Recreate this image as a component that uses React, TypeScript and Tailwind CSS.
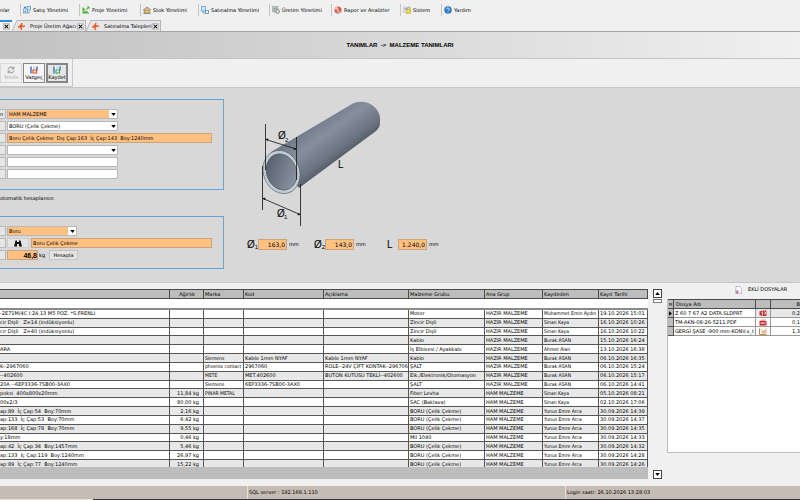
import type { ReactNode } from 'react';
import clsx from 'clsx';

const menu = [
  { label: 'Satış Yönetimi', icon: 'sales', width: 'w-[59px]' },
  { label: 'Proje Yönetimi', icon: 'project', width: 'w-[61px]' },
  { label: 'Stok Yönetimi', icon: 'stock', width: 'w-[58px]' },
  { label: 'Satınalma Yönetimi', icon: 'purchase', width: 'w-[71px]' },
  { label: 'Üretim Yönetimi', icon: 'production', width: 'w-[62px]' },
  { label: 'Rapor ve Analizler', icon: 'report', width: 'w-[69px]' },
  { label: 'Sistem', icon: 'system', width: 'w-[41px]' },
  { label: 'Yardım', icon: 'help', width: 'w-[60px]' },
];

// name, weight, brand, code, description, material group, main group, saved by, date
const rows = [
  ['-2E71M/4C I:24,13 M5 POZ. *S.FRENLI', '', '', '', '', 'Motor', 'HAZIR MALZEME', 'Muhammet Emin Aydın', '19.10.2026 15:01'],
  ['cir Dişli   Z=14 (indüksiyonlu)', '', '', '', '', 'Zincir Dişli', 'HAZIR MALZEME', 'Sinan Kaya', '16.10.2026 10:26'],
  ['cir Dişli   Z=40 (indüksiyonlu)', '', '', '', '', 'Zincir Dişli', 'HAZIR MALZEME', 'Sinan Kaya', '16.10.2026 10:22'],
  ['', '', '', '', '', 'Kablo', 'HAZIR MALZEME', 'Burak ASAN', '15.10.2026 16:24'],
  ['ARA', '', '', '', '', 'İş Elbisesi / Ayakkabı', 'HAZIR MALZEME', 'Ahmet Alan', '13.10.2026 16:38'],
  ['', '', 'Siemens', 'Kablo 1mm NYAF', 'Kablo 1mm NYAF', 'Kablo', 'HAZIR MALZEME', 'Burak ASAN', '06.10.2026 16:35'],
  ['K--2967060', '', 'phoenix contact', '2967060', 'ROLE--24V ÇİFT KONTAK--296706', 'ŞALT', 'HAZIR MALZEME', 'Burak ASAN', '06.10.2026 15:24'],
  ['--402600', '', 'METE', 'MET.402600', 'BUTON KUTUSU TEKLİ--402600', 'Elk./Elektronik/Otomasyon', 'HAZIR MALZEME', 'Burak ASAN', '06.10.2026 15:17'],
  ['20A --6EP3336-7SB00-3AX0', '', 'Siemens', '6EP3336-7SB00-3AX0', '', 'ŞALT', 'HAZIR MALZEME', 'Burak ASAN', '06.10.2026 14:41'],
  ['poksi  400x800x20mm', '11,84 kg', 'PINAR METAL', '', '', 'Fiber Levha', 'HAM MALZEME', 'Sinan Kaya', '05.10.2026 08:21'],
  ['00x2/3', '80,00 kg', '', '', '', 'SAC (Baklava)', 'HAM MALZEME', 'Sinan Kaya', '02.10.2026 17:06'],
  ['ap:89  İç Çap:54  Boy:70mm', '2,16 kg', '', '', '', 'BORU (Çelik Çekme)', 'HAM MALZEME', 'Yunus Emre Arca', '30.09.2026 14:39'],
  ['ap:133  İç Çap:53  Boy:70mm', '6,42 kg', '', '', '', 'BORU (Çelik Çekme)', 'HAM MALZEME', 'Yunus Emre Arca', '30.09.2026 14:37'],
  ['ap:168  İç Çap:78  Boy:70mm', '9,55 kg', '', '', '', 'BORU (Çelik Çekme)', 'HAM MALZEME', 'Yunus Emre Arca', '30.09.2026 14:35'],
  ['y:18mm', '0,46 kg', '', '', '', 'Mil 1040', 'HAM MALZEME', 'Yunus Emre Arca', '30.09.2026 14:33'],
  ['ap:42  İç Çap:34  Boy:1457mm', '5,46 kg', '', '', '', 'BORU (Çelik Çekme)', 'HAM MALZEME', 'Yunus Emre Arca', '30.09.2026 14:32'],
  ['ap:133  İç Çap:119  Boy:1240mm', '26,97 kg', '', '', '', 'BORU (Çelik Çekme)', 'HAM MALZEME', 'Yunus Emre Arca', '30.09.2026 14:28'],
  ['ap:89  İç Çap:77  Boy:1240mm', '15,22 kg', '', '', '', 'BORU (Çelik Çekme)', 'HAM MALZEME', 'Yunus Emre Arca', '30.09.2026 14:26'],
];

const headers = ['', 'Ağırlık', 'Marka', 'Kod', 'Açıklama', 'Malzeme Grubu', 'Ana Grup', 'Kaydeden', 'Kayıt Tarihi'];

const files = [
  { name: 'Z 60 7 67 A2 DATA.SLDPRT', icon: 'part', size: '0,2' },
  { name: 'TM-AKN-08-26-5211.PDF', icon: 'pdf', size: '0,1' },
  { name: 'GERGİ ŞASE -900 mm-KONV.x_t', icon: 'xt', size: '1,3' },
];

const MenuIcon = ({ name }: { name: string }) => (
  <svg viewBox="0 0 16 16" className="size-2 shrink-0" aria-hidden="true">
    {name === 'sales' && (
      <>
        <rect x="1" y="6" width="8" height="8" fill="#dcecf8" stroke="#4c8fc4" strokeWidth="1.4" />
        <rect x="8" y="1" width="7" height="7" fill="#cfe4f5" stroke="#4c8fc4" strokeWidth="1.4" />
        <path d="M2 3h4M4 1v4M12 11v4" stroke="#2f79b8" strokeWidth="1.6" />
        <path d="M3 11h3" stroke="#2f79b8" strokeWidth="2" />
      </>
    )}
    {name === 'project' && (
      <>
        <path d="M1 2l5 4-1 3 6 2 4 4H1z" fill="#49b53b" />
        <path d="M8 8l6-6M10 2h4v4" fill="none" stroke="#3fa535" strokeWidth="2" />
        <path d="M3 12l4-4" stroke="#fff" strokeWidth="1.4" />
      </>
    )}
    {name === 'stock' && (
      <>
        <path d="M1 8l7-6 7 6v6H1z" fill="#d8b78a" />
        <path d="M0 8l8-6 8 6" fill="none" stroke="#8b7a70" strokeWidth="1.6" />
        <rect x="3" y="9" width="10" height="4" fill="#f2cf7e" stroke="#a5762f" />
        <path d="M1 15h14" stroke="#7d93ac" strokeWidth="2" />
      </>
    )}
    {name === 'purchase' && (
      <>
        <rect x="1" y="1" width="8" height="9" fill="#cfe4f5" stroke="#5c9bcd" strokeWidth="1.4" />
        <rect x="9" y="9" width="6" height="6" fill="#e8f3fb" stroke="#4c8fc4" strokeWidth="1.6" />
        <path d="M4 10v4h4" fill="none" stroke="#3f85bd" strokeWidth="1.4" />
      </>
    )}
    {name === 'production' && (
      <>
        <rect x="1" y="1" width="11" height="11" fill="#c9ced2" stroke="#8e979d" />
        <path d="M1 5h11M1 8h11M5 1v11M9 1v11" stroke="#8e979d" />
        <circle cx="11" cy="11" r="4" fill="#b9c8b8" stroke="#7d887c" strokeWidth="1.4" />
        <circle cx="11" cy="11" r="1.4" fill="#fff" />
      </>
    )}
    {name === 'report' && (
      <>
        <circle cx="8" cy="8" r="7" fill="#d9574b" />
        <path d="M8 8V1a7 7 0 0 0-7 6z" fill="#f3b2a8" />
        <path d="M8 8l6 4a7 7 0 0 1-7 3z" fill="#b9b3b3" />
        <path d="M6 5l3 3-3 3" fill="none" stroke="#fff" strokeWidth="1.2" />
      </>
    )}
    {name === 'system' && (
      <>
        <rect x="1" y="2" width="13" height="11" fill="#dfe6ee" stroke="#aab6c6" />
        <path d="M3 5h6M3 8h4" stroke="#7c9cc9" strokeWidth="1.4" />
        <path d="M8 7V5a3 3 0 0 1 6 0v2" fill="none" stroke="#b59b2c" strokeWidth="1.4" />
        <rect x="7" y="7" width="8" height="8" fill="#f3d640" stroke="#b59b2c" />
      </>
    )}
    {name === 'help' && (
      <>
        <circle cx="8" cy="8" r="7.5" fill="#2e78c2" />
        <path d="M5.5 6.2a2.5 2.5 0 1 1 3.7 2.2C8.3 8.9 8 9.2 8 10" fill="none" stroke="#fff" strokeWidth="1.6" />
        <circle cx="8" cy="12.2" r="1" fill="#fff" />
      </>
    )}
  </svg>
);

const TabMark = () => (
  <svg viewBox="0 0 12 12" className="size-[7px] shrink-0" aria-hidden="true">
    <path d="M6.5 0L5.5 12M0 7l12-2M3 3l3 3" stroke="#ea5b2b" strokeWidth="2.4" />
  </svg>
);

const CloseButton = ({ label }: { label: string }) => (
  <button aria-label={label} className="flex size-[7px] shrink-0 items-center justify-center border border-[#c4c4c4] bg-white">
    <svg viewBox="0 0 8 8" className="size-[5px] shrink-0">
      <path d="M1 1l6 6M7 1L1 7" stroke="#111" strokeWidth="1.8" />
    </svg>
  </button>
);

const Tab = ({ label }: { label: string }) => (
  <div className="flex w-[74px] items-stretch">
    <svg viewBox="0 0 6 11" className="h-[11px] w-1.5 shrink-0" aria-hidden="true">
      <path d="M0 11L5 1H6V11Z" fill="#e6e6e6" />
      <path d="M0 11L5 .5H6" fill="none" stroke="#b5b5b5" />
    </svg>
    <div className="flex h-[11px] flex-1 items-center border-t border-r border-[#b5b5b5] bg-[#e6e6e6] pr-px">
      <TabMark />
      <button className="flex-1 pl-[5px] text-left whitespace-nowrap">{label}</button>
      <CloseButton label={`${label} kapat`} />
    </div>
  </div>
);

const DiskIcon = ({ mark }: { mark: string }) => (
  <svg viewBox="0 0 16 16" className="size-2 shrink-0" aria-hidden="true">
    <path d="M1 1h14v14H1z" fill="#fff" />
    <path d="M6 1h5v5H6z" fill="#cfd8e6" />
    <path d="M2 1v14M14 1v8" stroke="#2f5fb3" strokeWidth="2.6" />
    <path d="M6 14V8h7v6z" fill="none" stroke={mark} strokeWidth="2.4" />
  </svg>
);

const ToolButton = ({ label, children, disabled, active }: { label: string; children: ReactNode; disabled?: boolean; active?: boolean }) => (
  <button
    disabled={disabled}
    className={clsx(
      'flex h-5 w-[22px] flex-col items-center border pt-0.5 leading-[7px]',
      disabled && 'border-[#d8d8d8] text-[#a9a9a9]',
      active && 'border-2 border-[#858585] bg-[#e4e4e4] pt-px',
      !disabled && !active && 'border-[#858585] bg-[#f6f6f6]',
    )}
  >
    {children}
    {label}
  </button>
);

const Stub = ({ children }: { children?: ReactNode }) => (
  <span className="h-[10px] w-1.5 shrink-0 overflow-hidden border-y border-r border-[#b9b9b9] bg-[#e6e6e6] leading-[8px]">{children}</span>
);

const Dropdown = ({ label, value, className }: { label: string; value: string; className: string }) => (
  <div className="relative flex">
    <select aria-label={label} className={clsx('h-[10px] appearance-none border border-[#b9b9b9] pl-px leading-[8px]', className)}>
      <option>{value}</option>
    </select>
    <span className="pointer-events-none absolute top-px right-px flex size-2 items-center justify-center bg-white">
      <svg viewBox="0 0 6 4" className="h-[3px] w-[5px]">
        <path d="M0 0h6L3 4z" fill="#000" />
      </svg>
    </span>
  </div>
);

const Measure = ({ sign, sub, value }: { sign: string; sub?: string; value: string }) => (
  <label className="flex w-[50px] items-center">
    <span className="w-[11px] shrink-0 font-['Liberation_Sans',sans-serif] text-[10px] leading-[10px]">
      {sign}
      {sub && <sub className="text-[6px]">{sub}</sub>}
    </span>
    <input defaultValue={value} className="h-[11px] w-[29px] shrink-0 border border-[#c9a37c] bg-[#ffc080] pr-px text-right text-[6px]" />
    <span className="pl-0.5">mm</span>
  </label>
);

const Pipe = () => (
  <svg viewBox="255 95 135 140" className="h-[140px] w-[135px]" role="img" aria-label="Boru ölçüleri">
    <defs>
      <linearGradient id="body" gradientUnits="userSpaceOnUse" x1="312" y1="124" x2="340" y2="162">
        <stop offset="0" stopColor="#707a88" />
        <stop offset="0.35" stopColor="#858f9e" />
        <stop offset="0.75" stopColor="#6c7582" />
        <stop offset="1" stopColor="#4f5661" />
      </linearGradient>
      <linearGradient id="bore" x1="0" y1="0" x2="1" y2="1">
        <stop offset="0" stopColor="#4f5864" />
        <stop offset="1" stopColor="#939dab" />
      </linearGradient>
    </defs>
    <path d="M271 152L352 104C358 101 366 101 372 105C378 109 381 116 380 122C380 126 379 128 376 131L299 188Z" fill="url(#body)" />
    <ellipse cx="281.5" cy="172" rx="18" ry="22" transform="rotate(-20 281.5 172)" fill="#ced7df" stroke="#4b535e" strokeWidth="0.6" />
    <ellipse cx="281.5" cy="172" rx="16.6" ry="20.5" transform="rotate(-20 281.5 172)" fill="none" stroke="#a3aeba" strokeWidth="1.8" strokeDasharray="0.6 1.4" />
    <ellipse cx="281.5" cy="172" rx="15" ry="18.5" transform="rotate(-20 281.5 172)" fill="url(#bore)" stroke="#4b535e" strokeWidth="0.6" />
    <g stroke="#111" strokeWidth="0.8">
      <path d="M265.5 124V170M296.5 137V180M262.5 166V210M300.5 184V226" />
      <path d="M266 139.5L296 149M263 198.5L300 214.5" />
    </g>
    <path d="M265.5 139l3-.5-1 2.5zM296.5 149.5l-3 .5 1-2.5zM262.5 198l3.2-.2-1.3 2.5zM300.5 215l-3.2.2 1.3-2.5z" fill="#111" />
    <g className="fill-black font-['Liberation_Sans',sans-serif] text-[10px]">
      <text x="278" y="139">Ø</text>
      <text x="277" y="217">Ø</text>
      <text x="338" y="168">L</text>
    </g>
    <g className="fill-black font-['Liberation_Sans',sans-serif] text-[6px]">
      <text x="285" y="142">2</text>
      <text x="284" y="219">1</text>
    </g>
  </svg>
);

const FileIcon = ({ name }: { name: string }) => (
  <svg viewBox="0 0 16 14" className="mx-auto h-[7px] w-2" aria-hidden="true">
    {name === 'part' && (
      <>
        <path d="M1 3l6-2v11L1 10zM8 1h7v11H8z" fill="#c9262b" />
        <path d="M4 5l3 1v3M10 4h3v4h-3" fill="none" stroke="#fff" strokeWidth="1.4" />
      </>
    )}
    {name === 'pdf' && (
      <>
        <path d="M3 1h10v4H3z" fill="#e9a6a6" />
        <rect x="1" y="4" width="14" height="9" rx="1" fill="#c9262b" />
        <path d="M3 8h10" stroke="#fff" strokeWidth="2" />
      </>
    )}
    {name === 'xt' && (
      <>
        <path d="M1 1v12h14" fill="none" stroke="#c48a4a" strokeWidth="2" />
        <path d="M4 10l4-3 2 2 5-7v9H4z" fill="#e6b98a" />
        <path d="M4 3l4 5M8 8l7-6" stroke="#b86a2c" strokeWidth="1.4" />
      </>
    )}
  </svg>
);

const ScrollArrow = ({ up }: { up?: boolean }) => (
  <button aria-label={up ? 'Yukarı' : 'Aşağı'} className="flex size-[9px] items-center justify-center border border-[#444] bg-white">
    <svg viewBox="0 0 6 4" className="h-[3px] w-[5px]">
      <path d={up ? 'M0 4h6L3 0z' : 'M0 0h6L3 4z'} fill="#000" />
    </svg>
  </button>
);

const Columns = () => (
  <colgroup>
    <col />
    <col className="w-[34px]" />
    <col className="w-10" />
    <col className="w-20" />
    <col className="w-[85px]" />
    <col className="w-[76px]" />
    <col className="w-[58px]" />
    <col className="w-14" />
    <col className="w-[49px]" />
  </colgroup>
);

const MaterialTable = () => (
  <div className="h-[190px] overflow-hidden bg-[#bdbdbd]">
    <div className="h-[178px] overflow-hidden">
      <table className="w-full table-fixed border-separate border-spacing-0 bg-white leading-[7px] whitespace-pre">
        <Columns />
        <thead>
          <tr className="h-[10px]">
            {headers.map((header, i) => (
              <th
                key={i}
                className={clsx(
                  'border-y border-r border-[#4a4a4a] bg-[#bdbdbd] p-0 pl-px font-normal',
                  header === 'Ağırlık' ? 'text-center' : 'text-left',
                )}
              >
                {header}
              </th>
            ))}
          </tr>
          <tr className="h-[11px]">
            <td colSpan={9} className="border-b-2 border-[#8a8a8a] p-0" />
          </tr>
        </thead>
      </table>
      <table className="h-[159px] w-full table-fixed border-separate border-spacing-0 bg-white leading-[7px] whitespace-pre">
        <Columns />
        <tbody>
          {rows.map((row, r) => (
            <tr key={r} className="even:bg-[#e8e8e8]">
              {row.map((cell, c) => (
                <td
                  key={c}
                  className={clsx(
                    'overflow-hidden border-r border-b border-[#555] p-0',
                    c === 1 && 'pr-1 text-right',
                    c > 1 && 'pl-px',
                    // long names in narrow columns
                    (c === 2 || c === 7) && "font-['DejaVu_Sans_Condensed',sans-serif]",
                  )}
                >
                  {cell}
                </td>
              ))}
            </tr>
          ))}
        </tbody>
      </table>
    </div>
  </div>
);

const Attachments = () => (
  <aside className="w-[133px] shrink-0 overflow-hidden">
    <h2 className="mb-[3px] flex h-[13px] items-center gap-1.5 pl-[68px] whitespace-nowrap">
      <svg viewBox="0 0 14 16" className="h-2 w-[7px] shrink-0" aria-hidden="true">
        <path d="M2 1h7l4 4v10H2z" fill="#fff" stroke="#8a7aa8" />
        <path d="M1 8l5 5M6 8v5H1" fill="none" stroke="#b1508c" strokeWidth="1.6" />
      </svg>
      EKLİ DOSYALAR
    </h2>
    <div className="h-[154px] border-b border-l border-[#bcbcbc] bg-white">
      <table className="w-full table-fixed border-separate border-spacing-0 leading-[7px] whitespace-pre">
        <colgroup>
          <col className="w-1.5" />
          <col className="w-[82px]" />
          <col className="w-[15px]" />
          <col />
        </colgroup>
        <thead>
          <tr className="h-[10px] bg-[#bdbdbd]">
            <th className="border-y border-r border-[#4a4a4a] p-0 font-normal">≡</th>
            <th className="border-y border-r border-[#4a4a4a] p-0 pl-0.5 text-left font-normal">Dosya Adı</th>
            <th className="border-y border-r border-[#4a4a4a] p-0" />
            <th className="border-y border-[#4a4a4a] p-0 text-right font-normal">B</th>
          </tr>
        </thead>
        <tbody>
          {files.map((file, i) => (
            <tr key={file.name} className="h-[9px] first:bg-[#e8e8e8]">
              <td className="border-r border-b border-[#555] bg-[#bdbdbd] p-0">
                {i === 0 && (
                  <svg viewBox="0 0 4 6" className="mx-auto h-[5px] w-[3px]">
                    <path d="M0 0v6l4-3z" />
                  </svg>
                )}
              </td>
              <td className="border-r border-b border-[#999] bg-white p-0 pl-px">{file.name}</td>
              <td className="border-r border-b border-[#999] p-0">
                <FileIcon name={file.icon} />
              </td>
              <td className="border-b border-[#999] p-0 text-right">{file.size}</td>
            </tr>
          ))}
        </tbody>
      </table>
    </div>
  </aside>
);

export default function App() {
  return (
    <div className="flex min-h-screen w-full flex-col overflow-hidden bg-[#f0f0f0] font-['DejaVu_Sans',sans-serif] text-[5px] leading-[9px] text-black">
      <nav className="flex h-5 items-center overflow-hidden whitespace-nowrap">
        <a href="#" className="w-5 text-inherit">nlar</a>
        {menu.map((item) => (
          <a key={item.label} href="#" className={clsx('flex h-3 shrink-0 items-center gap-0.5 border-l border-[#c4c4c4] pl-0.5', item.width)}>
            <MenuIcon name={item.icon} />
            {item.label}
          </a>
        ))}
      </nav>

      <div className="flex h-3 items-end border-b border-[#a5a5a5]">
        <div className="flex h-[11px] w-3 items-center justify-end border-t-2 border-[#2f8fd8] bg-[#f4f4f4] pr-0.5">
          <CloseButton label="Malzeme kapat" />
        </div>
        <Tab label="Proje Üretim Ağacı" />
        <Tab label="Satınalma Talepleri" />
      </div>

      <header className="flex h-[27px] items-center justify-center border-b border-[#c4c4c4] bg-linear-to-r from-[#c2c2c2] to-[#f0f0f0]">
        <h1 className="font-['Liberation_Sans',sans-serif] text-[6px] font-bold whitespace-pre text-black">{'TANIMLAR  ->  MALZEME TANIMLARI'}</h1>
      </header>

      <div className="flex h-7">
        <div className="flex items-center gap-px border-r border-b border-[#c9c9c9] pr-1">
          <ToolButton label="Yenile" disabled>
            <svg viewBox="0 0 14 14" className="size-2 shrink-0" fill="none" stroke="#a5a5a5" strokeWidth="2">
              <path d="M2 6a5 5 0 0 1 9-2M12 8a5 5 0 0 1-9 2M12 1v4H8M2 13V9h4" />
            </svg>
          </ToolButton>
          <ToolButton label="Vazgeç">
            <DiskIcon mark="#d8432f" />
          </ToolButton>
          <ToolButton label="Kaydet" active>
            <DiskIcon mark="#2fa04b" />
          </ToolButton>
        </div>
      </div>

      <main className="flex h-[196px] border-y border-[#c6c6c6] bg-[#d8d8d8]">
        <form className="w-56 shrink-0 pt-[11px]">
          <fieldset className="flex h-[91px] flex-col gap-0.5 border-y border-r border-[#6aa5d2] pt-[9px]">
            <div className="flex gap-px">
              <Stub>n</Stub>
              <Dropdown label="Ana grup" value="HAM MALZEME" className="w-[111px] bg-[#ffc080]" />
            </div>
            <div className="flex gap-px">
              <Stub />
              <Dropdown label="Malzeme grubu" value="BORU (Çelik Çekme)" className="w-[111px] bg-white" />
            </div>
            <div className="flex gap-px">
              <Stub />
              <input
                aria-label="Malzeme adı"
                defaultValue="Boru Çelik Çekme  Dış Çap:163  İç Çap:143  Boy:1240mm"
                className="h-[10px] w-[205px] border border-[#c9a37c] bg-[#ffc080] pl-px"
              />
            </div>
            <div className="flex gap-px">
              <Stub />
              <Dropdown label="Marka" value="" className="w-[111px] bg-white" />
            </div>
            <div className="flex gap-px">
              <Stub />
              <input aria-label="Kod" className="h-[10px] w-[111px] border border-[#b9b9b9] bg-white" />
            </div>
            <div className="flex gap-px">
              <Stub />
              <input aria-label="Açıklama" className="h-[10px] w-[111px] border border-[#b9b9b9] bg-white" />
            </div>
          </fieldset>

          <p className="pt-1 pb-[13px]">otomatik hesaplansın</p>

          <fieldset className="flex h-[53px] flex-col gap-0.5 border-y border-r border-[#6aa5d2] pt-[9px]">
            <div className="flex gap-px">
              <Stub />
              <Dropdown label="Profil" value="Boru" className="w-[70px] bg-[#ffc080]" />
            </div>
            <div className="flex gap-px">
              <Stub />
              <button type="button" aria-label="Ara" className="mr-px flex h-[10px] w-[22px] items-center justify-center border border-[#cdcdcd] bg-[#e4e4e4]">
                <svg viewBox="0 0 16 14" className="h-[7px] w-2">
                  <path d="M3 1h3v3h4V1h3l3 12h-6V8H6v5H0z" fill="#111" />
                </svg>
              </button>
              <input aria-label="Profil adı" defaultValue="Boru Çelik Çekme" className="h-[10px] w-[181px] border border-[#c9a37c] bg-[#ffc080] pl-px" />
            </div>
            <div className="flex items-center gap-px">
              <Stub />
              <input
                aria-label="Ağırlık"
                defaultValue="46,8"
                className="h-[10px] w-[31px] border border-[#c9a37c] bg-[#ffc080] text-right font-['Liberation_Sans',sans-serif] text-[7px] font-bold"
              />
              <span className="w-[9px]">kg</span>
              <button type="button" className="h-[10px] w-[29px] border border-[#c3c3c3] bg-[#e4e4e4] leading-[8px]">
                Hesapla
              </button>
            </div>
          </fieldset>
        </form>

        <section className="flex flex-col gap-1 pt-[7px] pl-[23px]">
          <div className="pl-2">
            <Pipe />
          </div>
          <div className="flex gap-[17px]">
            <Measure sign="Ø" sub="1" value="163,0" />
            <Measure sign="Ø" sub="2" value="143,0" />
            <div className="pl-1.5">
              <Measure sign="L" value="1.240,0" />
            </div>
          </div>
        </section>
      </main>

      <div className="flex pb-1.5">
        <div className="min-w-0 flex-1 pt-1.5">
          <MaterialTable />
        </div>
        <div className="flex w-[19px] flex-col items-center pt-1.5">
          <ScrollArrow up />
          <div className="mt-px h-1 w-[9px] border border-[#777] bg-white" />
          <div className="mt-auto">
            <ScrollArrow />
          </div>
        </div>
        <Attachments />
      </div>

      <footer className="mt-auto bg-[#c5bdb3]">
        <div className="flex h-[13px] items-stretch leading-[13px]">
          <div className="w-[247px] shrink-0" />
          <div className="min-w-0 flex-1 border-l border-[#e4dfd8] pl-px">SQL server : 192.168.1.110</div>
          <div className="w-[235px] shrink-0 border-l border-[#e4dfd8] pl-px">Login saati: 26.10.2026 13:28:03</div>
        </div>
        <div className="flex h-px bg-[#3a3a3a]">
          <div className="w-[93px] bg-[#e4e0da]" />
        </div>
      </footer>
    </div>
  );
}
